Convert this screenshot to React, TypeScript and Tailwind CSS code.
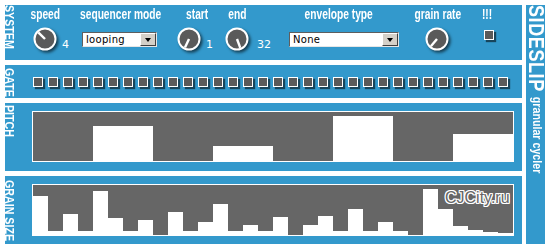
import React from "react";

const PITCH = [0, 0, 0, 0, 35, 35, 35, 35, 0, 0, 0, 0, 15, 15, 15, 15, 0, 0, 0, 0, 45, 45, 45, 45, 0, 0, 0, 0, 27, 27, 27, 27];
const GRAIN = [39, 4, 21, 4, 44, 17, 4, 15, 0, 23, 4, 13, 31, 4, 10, 4, 18, 0, 10, 19, 4, 26, 4, 13, 4, 0, 46, 26, 9, 5, 3, 2];

// no narrow face installed, so Liberation Sans squeezed to Arial Narrow proportions
function VLabel({ text, className }: { text: string; className: string }) {
    return (
        <div className={"shrink-0 " + className}>
            <div className="[writing-mode:vertical-rl] whitespace-nowrap font-bold text-[13px] leading-none -ml-[2px] origin-top scale-y-[0.82]">
                {text}
            </div>
        </div>
    );
}

function Knob({ angle }: { angle: number }) {
    const r = (angle * Math.PI) / 180;
    const x = 12 + Math.sin(r) * 9.5;
    const y = 12 - Math.cos(r) * 9.5;
    return (
        <svg width="24" height="24" viewBox="0 0 24 24" className="shrink-0 overflow-visible drop-shadow-[2px_2px_1.5px_rgba(0,0,0,0.6)]">
            <circle cx="12" cy="12" r="10.5" fill="#5a5a5a" stroke="#ffffff" strokeWidth="2" />
            <line x1="12" y1="12" x2={x} y2={y} stroke="#ffffff" strokeWidth="2.4" />
        </svg>
    );
}

function Select({ value, className }: { value: string; className: string }) {
    return (
        <div className={"flex h-[15px] bg-white border border-t-[#5e5e5e] border-l-[#5e5e5e] border-b-[#e6e6e6] border-r-[#e6e6e6] " + className}>
            <div className="flex-1 pl-[3px] text-black text-[10px] leading-[13px] font-['DejaVu_Sans',sans-serif] tracking-[0.3px]">
                {value}
            </div>
            <div className="w-[16px] h-[13px] bg-[#d4d0c8] border border-t-white border-l-white border-b-[#404040] border-r-[#404040] flex items-center justify-center">
                <div className="w-0 h-0 border-l-[3.5px] border-r-[3.5px] border-t-[4px] border-l-transparent border-r-transparent border-t-black" />
            </div>
        </div>
    );
}

function Value({ text, className }: { text: string; className: string }) {
    return (
        <div className={"text-[11px] leading-[10px] font-['DejaVu_Sans',sans-serif] mb-[1px] " + className}>{text}</div>
    );
}

function Label({ text, className }: { text: string; className: string }) {
    return (
        <div className={"h-[16px] text-[14px] font-bold leading-[16px] text-center whitespace-nowrap flex justify-center " + className}>
            <span className="inline-block scale-x-[0.73]">{text}</span>
        </div>
    );
}

function SystemPanel() {
    return (
        <div className="h-[55px] bg-[#3399cc] flex">
            <VLabel text="SYSTEM" className="w-[24px]" />
            <div className="flex pt-[1px]">
                <div className="w-[46px] flex flex-col">
                    <Label text="speed" className="ml-[2px] w-[29px]" />
                    <div className="flex items-end mt-[5px]">
                        <div className="ml-[4px]"><Knob angle={-45} /></div>
                        <Value text="4" className="ml-[5px]" />
                    </div>
                </div>
                <div className="w-[95px] flex flex-col">
                    <Label text="sequencer mode" className="ml-[5px] w-[82px]" />
                    <Select value="looping" className="ml-[7px] mt-[10px] w-[75px]" />
                </div>
                <div className="w-[48px] flex flex-col">
                    <Label text="start" className="ml-[16px] w-[23px]" />
                    <div className="flex items-end mt-[5px]">
                        <div className="ml-[7px]"><Knob angle={-155} /></div>
                        <Value text="1" className="ml-[5px]" />
                    </div>
                </div>
                <div className="w-[62px] flex flex-col">
                    <Label text="end" className="ml-[10px] w-[18px]" />
                    <div className="flex items-end mt-[5px]">
                        <div className="ml-[7px]"><Knob angle={160} /></div>
                        <Value text="32" className="ml-[8px]" />
                    </div>
                </div>
                <div className="w-[125px] flex flex-col">
                    <Label text="envelope type" className="ml-[24px] w-[69px]" />
                    <Select value="None" className="ml-[9px] mt-[10px] w-[110px]" />
                </div>
                <div className="w-[70px] flex flex-col">
                    <Label text="grain rate" className="ml-[10px] w-[46px]" />
                    <div className="flex mt-[5px] ml-[20px]">
                        <Knob angle={-140} />
                    </div>
                </div>
                <div className="w-[30px] flex flex-col">
                    <Label text="!!!" className="ml-[6px] w-[11px]" />
                    <div className="ml-[9px] mt-[8px] w-[10px] h-[10px] bg-[#5a5a5a] border border-white shadow-[2px_2px_1px_rgba(0,0,0,0.55)]" />
                </div>
            </div>
        </div>
    );
}

function GatePanel() {
    return (
        <div className="h-[33px] bg-[#3399cc] flex items-start">
            <VLabel text="GATE" className="w-[27px] pt-[3px]" />
            <div className="flex ml-[1px] mt-[12px]">
                {GRAIN.map((_, i) => (
                    <div key={i} className="w-[15px]">
                        <div className="w-[10px] h-[10px] bg-[#5a5a5a] border border-white shadow-[2px_2px_1px_rgba(0,0,0,0.55)]" />
                    </div>
                ))}
            </div>
        </div>
    );
}

function PitchPanel() {
    return (
        <div className="h-[68px] bg-[#3399cc] flex items-start">
            <VLabel text="PITCH" className="w-[27px] pt-[2px]" />
            <div className="mt-[8px] w-[482px] h-[51px] border border-white bg-[#666666] flex items-end">
                {PITCH.map((h, i) => (
                    <div key={i} className="w-[15px] bg-white" style={{ height: h }} />
                ))}
            </div>
        </div>
    );
}

function GrainPanel() {
    return (
        <div className="h-[68px] bg-[#3399cc] flex items-start">
            <VLabel text="GRAIN SIZE" className="w-[27px] pt-[4px]" />
            <div className="relative mt-[8px] w-[482px] h-[52px] border border-white bg-[#666666] flex items-end">
                {GRAIN.map((h, i) => (
                    <div key={i} className="w-[15px] bg-white" style={{ height: h }} />
                ))}
                <div className="absolute left-[412px] top-[5px] text-[16px] leading-none text-[#666666] font-['Liberation_Sans',sans-serif] [text-shadow:1px_0_#fff,-1px_0_#fff,0_1px_#fff,0_-1px_#fff,1px_1px_#fff,-1px_-1px_#fff,1px_-1px_#fff,-1px_1px_#fff]">
                    CJCity.ru
                </div>
            </div>
        </div>
    );
}

function Sidebar() {
    return (
        <div className="w-[19px] h-[239px] bg-[#3399cc]">
            <div className="flex flex-col items-center origin-top scale-y-[0.82]">
                <div className="[writing-mode:vertical-rl] whitespace-nowrap font-bold text-[22px] leading-none tracking-[0.7px]">
                    SIDESLIP
                </div>
                <div className="[writing-mode:vertical-rl] whitespace-nowrap font-bold text-[13px] leading-none mt-[6px] ml-[3px]">
                    granular cycler
                </div>
            </div>
        </div>
    );
}

export default function App() {
    return (
        <div className="w-[550px] h-[250px] bg-white flex items-start gap-[4px] p-[5px] text-white font-['Liberation_Sans',sans-serif]">
            <div className="w-[517px] flex flex-col gap-[5px]">
                <SystemPanel />
                <GatePanel />
                <PitchPanel />
                <GrainPanel />
            </div>
            <Sidebar />
        </div>
    );
}
